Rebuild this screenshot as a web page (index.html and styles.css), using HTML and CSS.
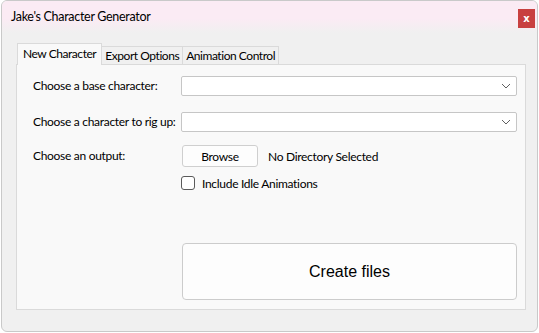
FILE: index.html
```html
<!DOCTYPE html>
<html lang="en">
<head>
    <meta charset="UTF-8">
    <title>Jake's Character Generator</title>
    <link rel="stylesheet" href="styles.css">
</head>
<body>
    <div class="window">
        <div class="titlebar">
            <span class="title">Jake's Character Generator</span>
            <span class="close-btn">x</span>
        </div>

        <div class="tabs">
            <span class="tab active">New Character</span>
            <span class="tab">Export Options</span>
            <span class="tab">Animation Control</span>
        </div>

        <div class="panel">
            <div class="form">
                <label class="row-label">Choose a base character:</label>
                <div class="combo">
                    <svg width="10" height="6" viewBox="0 0 10 6"><path d="M1 1 L5 5 L9 1" fill="none" stroke="#606060" stroke-width="1"/></svg>
                </div>

                <label class="row-label">Choose a character to rig up:</label>
                <div class="combo">
                    <svg width="10" height="6" viewBox="0 0 10 6"><path d="M1 1 L5 5 L9 1" fill="none" stroke="#606060" stroke-width="1"/></svg>
                </div>

                <label class="row-label tall">Choose an output:</label>
                <div class="output">
                    <button class="browse-btn">Browse</button>
                    <span class="dir">No Directory Selected</span>
                </div>

                <span></span>
                <div class="check">
                    <span class="box"></span>
                    <span>Include Idle Animations</span>
                </div>

                <span></span>
                <button class="create-btn">Create files</button>
            </div>
        </div>
    </div>
</body>
</html>
```

FILE: styles.css
```css
body {
    margin: 0;
    padding: 0;
    background: #ffffff;
    font-family: 'Lato', 'Noto Sans', sans-serif;
    font-size: 12px;
    letter-spacing: -0.3px;
    color: #000;
}

.window {
    margin: 0 0 0 1px;
    width: 537px;
    height: 332px;
    box-sizing: border-box;
    border: 1px solid #c9c9c9;
    border-radius: 6px;
    background: #f0f0f0;
    overflow: hidden;
}

.titlebar {
    height: 32px;
    display: flex;
    align-items: center;
    justify-content: space-between;
    background: linear-gradient(to bottom, #fbebf4 0%, #fbebf4 55%, #f0f0f0 100%);
    padding: 0 2px 0 9px;
    margin-bottom: 10px;
}

.title {
    font-size: 12.5px;
    margin-top: -2px;
}

.close-btn {
    width: 17px;
    height: 19px;
    background: #c84040;
    color: #fff;
    font-family: 'DejaVu Sans', sans-serif;
    font-size: 10px;
    font-weight: bold;
    letter-spacing: 0;
    display: flex;
    align-items: center;
    justify-content: center;
    margin-top: 2px;
}

.tabs {
    display: flex;
    padding-left: 15px;
    height: 21px;
    align-items: flex-end;
    position: relative;
    z-index: 1;
}

.tab {
    height: 18px;
    line-height: 18px;
    padding: 0 3px;
    border: 1px solid #dadada;
    border-bottom: none;
    margin-left: -1px;
    box-sizing: border-box;
    background: #f0f0f0;
    white-space: nowrap;
    letter-spacing: -0.45px;
}

.tab.active {
    height: 22px;
    line-height: 20px;
    background: #f9f9f9;
    padding: 0 5px;
    margin-left: 0;
    margin-bottom: -1px;
}

.panel {
    margin-left: 14px;
    width: 510px;
    height: 246px;
    box-sizing: border-box;
    border: 1px solid #dadada;
    background: #f9f9f9;
    padding: 11px 8px 0 16px;
}

.form {
    display: grid;
    grid-template-columns: 148px 336px;
    grid-template-rows: 36px 33px 31px 67px 57px;
    align-items: start;
}

.row-label {
    white-space: nowrap;
    line-height: 20px;
}

.row-label.tall {
    line-height: 22px;
}

.combo {
    height: 20px;
    box-sizing: border-box;
    border: 1px solid #c6c6c6;
    border-radius: 2px;
    background: #ffffff;
    display: flex;
    justify-content: flex-end;
    align-items: center;
    padding-right: 5px;
}

.output {
    display: flex;
    align-items: center;
    gap: 10px;
    padding-left: 1px;
}

.browse-btn {
    width: 76px;
    height: 22px;
    font-family: inherit;
    font-size: 12px;
    letter-spacing: inherit;
    background: #fdfdfd;
    border: 1px solid #cfcfcf;
    border-radius: 3px;
    padding: 0;
}

.check {
    display: flex;
    align-items: center;
    gap: 7px;
    height: 14px;
}

.box {
    width: 12px;
    height: 12px;
    border: 1px solid #5a5a5a;
    border-radius: 3px;
    background: #fff;
}

.create-btn {
    margin-left: 1px;
    height: 57px;
    width: 335px;
    font-family: 'Liberation Sans', sans-serif;
    font-size: 16px;
    background: #fdfdfd;
    border: 1px solid #cccccc;
    border-radius: 4px;
}
```
